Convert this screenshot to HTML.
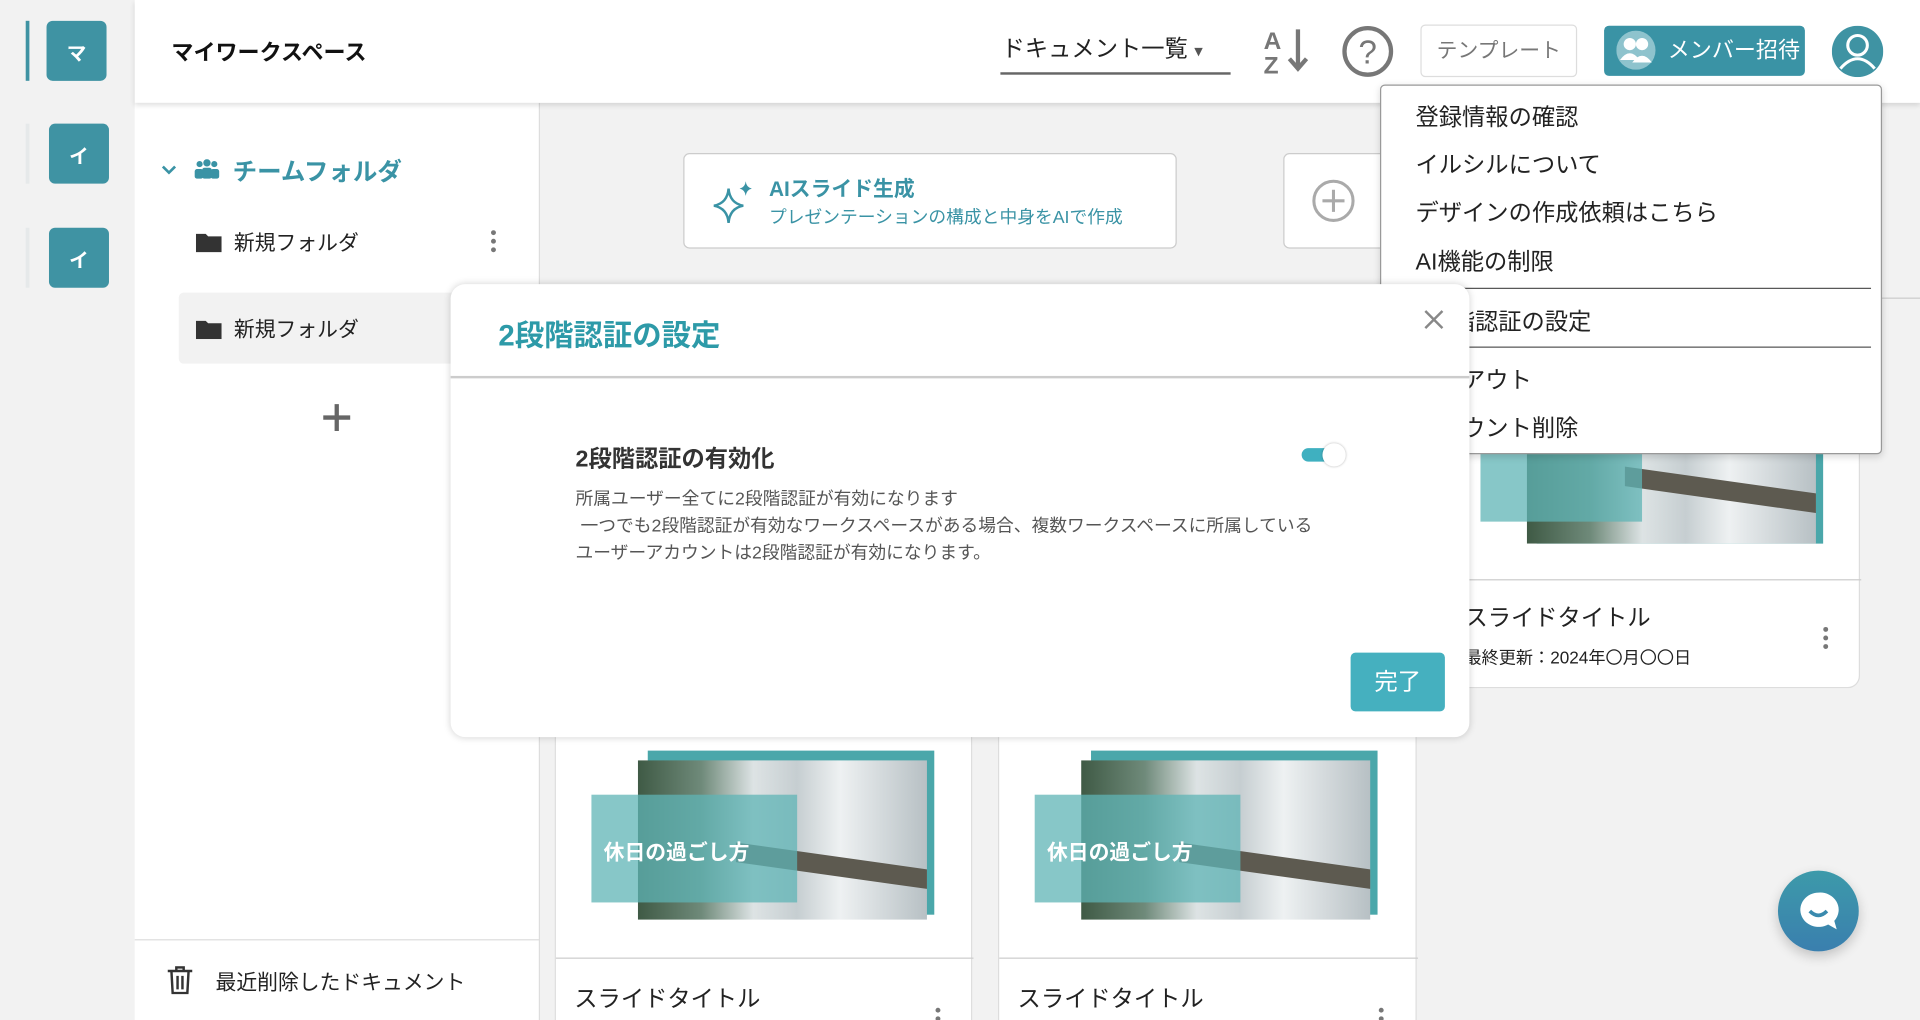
<!DOCTYPE html>
<html><head><meta charset="utf-8"><style>
*{box-sizing:border-box;margin:0;padding:0}
html,body{width:1920px;height:1020px;overflow:hidden;background:#f2f2f2}
body{font-family:"Liberation Sans","Noto Sans CJK JP",sans-serif;color:#222}
#w{position:absolute;left:0;top:0;width:1568px;height:833px;transform:scale(1.22449);transform-origin:0 0;background:#f2f2f2;overflow:hidden}
.a{position:absolute}
.sq{position:absolute;width:49px;height:49px;background:#3f93a3;border-radius:5px;color:#fff;font-weight:bold;font-size:16px;display:flex;align-items:center;justify-content:center}
.thumb{position:absolute;width:280px;height:140px}
.thumb .fr{position:absolute;left:46px;top:0;width:234px;height:134px;background:#4aa7aa}
.thumb .ph{position:absolute;left:38px;top:8px;width:236px;height:130px;background:linear-gradient(90deg,#3f5a45 0%,#6f8a7a 22%,#dde3e4 40%,#c6ced1 55%,#eef1f2 70%,#b7c0c4 100%)}
.thumb .ph:after{content:"";position:absolute;left:80px;top:78px;width:156px;height:16px;background:#5d5a50;transform:skewY(8deg)}
.thumb .bx{position:absolute;left:0;top:36px;width:168px;height:88px;background:rgba(95,180,182,.75);color:#fff;font-weight:bold;font-size:17px;padding:33px 0 0 10px}
.card{position:absolute;background:#fff;border:1px solid #ddd}
.kb{position:absolute;width:4px}
.kb i{display:block;width:4px;height:4px;border-radius:2px;background:#777;margin-bottom:3px}
.mi{position:absolute;left:28px;font-size:19px;color:#222}
</style></head><body><div id="w">
<div class="a" style="left:21px;top:17px;width:3px;height:49px;background:#3f93a3"></div>
<div class="sq" style="left:38px;top:17px">マ</div>
<div class="a" style="left:21px;top:101px;width:3px;height:49px;background:#e6e9ea"></div>
<div class="sq" style="left:40px;top:101px">イ</div>
<div class="a" style="left:21px;top:186px;width:3px;height:49px;background:#e6e9ea"></div>
<div class="sq" style="left:40px;top:186px">イ</div>

<div class="card" style="left:558px;top:125px;width:403px;height:78px;border-color:#ccc;border-radius:5px">
<svg class="a" style="left:22px;top:20px" width="36" height="38" viewBox="0 0 36 38"><path d="M14 8 Q15 20 26 22 Q15 24 14 36 Q13 24 2 22 Q13 20 14 8Z" fill="none" stroke="#3a93a5" stroke-width="2"/><path d="M28 2 Q28.5 7 33 8 Q28.5 9 28 14 Q27.5 9 23 8 Q27.5 7 28 2Z" fill="#3a93a5"/></svg>
<div class="a" style="left:69px;top:14px;font-size:17px;font-weight:bold;color:#3a93a5">AIスライド生成</div>
<div class="a" style="left:69px;top:40px;font-size:14.5px;color:#3a93a5">プレゼンテーションの構成と中身をAIで作成</div>
</div>
<div class="card" style="left:1048px;top:125px;width:200px;height:78px;border-color:#ccc;border-radius:5px">
<svg class="a" style="left:22px;top:20px" width="36" height="36"><circle cx="18" cy="18" r="16" fill="none" stroke="#aaa" stroke-width="2.5"/><path d="M18 9v18M9 18h18" stroke="#aaa" stroke-width="2.5"/></svg>
</div>
<div class="a" style="left:1200px;top:243px;width:368px;height:1px;background:#ccc"></div>
<div class="card" style="left:1170px;top:243px;width:349px;height:319px;border-radius:0 0 10px 10px">
<div class="thumb" style="left:38px;top:100px;height:100px;overflow:hidden"><div class="fr"></div><div class="ph" style="top:-30px"></div><div class="bx" style="top:0;height:82px;width:132px;padding-top:0">休日の過ごし方</div></div>
<div class="a" style="left:0;top:229px;width:349px;height:1px;background:#ccc"></div>
<div class="a" style="left:25px;top:246px;font-size:19px">スライドタイトル</div>
<div class="a" style="left:25px;top:283px;font-size:14px">最終更新：2024年〇月〇〇日</div>
<div class="kb" style="left:318px;top:268px"><i></i><i></i><i></i></div>
</div>
<div class="card" style="left:453px;top:590px;width:341px;height:260px">
<div class="thumb" style="left:29px;top:22px"><div class="fr"></div><div class="ph"></div><div class="bx">休日の過ごし方</div></div>
<div class="a" style="left:0;top:191px;width:341px;height:1px;background:#ccc"></div>
<div class="a" style="left:15px;top:210px;font-size:19px">スライドタイトル</div>
<div class="kb" style="left:310px;top:232px"><i></i><i></i><i></i></div>
</div>
<div class="card" style="left:815px;top:590px;width:342px;height:260px">
<div class="thumb" style="left:29px;top:22px"><div class="fr"></div><div class="ph"></div><div class="bx">休日の過ごし方</div></div>
<div class="a" style="left:0;top:191px;width:342px;height:1px;background:#ccc"></div>
<div class="a" style="left:15px;top:210px;font-size:19px">スライドタイトル</div>
<div class="kb" style="left:310px;top:232px"><i></i><i></i><i></i></div>
</div>

<div class="a" style="left:110px;top:84px;width:331px;height:749px;background:#fff;border-right:1px solid #ddd">
<svg class="a" style="left:22px;top:50px" width="12" height="10"><path d="M1 2l5 5 5-5" fill="none" stroke="#3a93a5" stroke-width="2.2"/></svg>
<svg class="a" style="left:48px;top:46px" width="22" height="16" fill="#3a93a5"><circle cx="5" cy="4" r="2.5"/><circle cx="11" cy="3" r="3"/><circle cx="17" cy="4" r="2.5"/><rect x="1" y="8" width="7" height="8" rx="2"/><rect x="7" y="7" width="8" height="9" rx="2"/><rect x="14" y="8" width="7" height="8" rx="2"/></svg>
<div class="a" style="left:80px;top:40px;font-size:20px;font-weight:bold;color:#3a93a5">チームフォルダ</div>
<svg class="a" style="left:50px;top:106px" width="21" height="16"><path d="M0 1h8l2 2h11v13H0z" fill="#333"/></svg>
<div class="a" style="left:81px;top:100px;font-size:17px">新規フォルダ</div>
<div class="kb" style="left:291px;top:104px"><i></i><i></i><i></i></div>
<div class="a" style="left:36px;top:155px;width:260px;height:58px;background:#f2f2f2;border-radius:4px"></div>
<svg class="a" style="left:50px;top:177px" width="21" height="16"><path d="M0 1h8l2 2h11v13H0z" fill="#333"/></svg>
<div class="a" style="left:81px;top:171px;font-size:17px">新規フォルダ</div>
<svg class="a" style="left:153px;top:245px" width="24" height="24"><path d="M12 1v22M1 12h22" stroke="#666" stroke-width="3.5"/></svg>
<div class="a" style="left:0;top:683px;width:331px;height:1px;background:#ddd"></div>
<svg class="a" style="left:26px;top:705px" width="22" height="23"><path d="M1 4h20M8 4V1h6v3M4 4l1 18h12l1-18M9 8v11M13 8v11" fill="none" stroke="#333" stroke-width="2"/></svg>
<div class="a" style="left:66px;top:704px;font-size:17px">最近削除したドキュメント</div>
</div>

<div class="a" style="left:110px;top:0;width:1458px;height:84px;background:#fff;box-shadow:0 2px 4px rgba(0,0,0,.12)">
<div class="a" style="left:30px;top:29px;font-size:18px;font-weight:bold;color:#111">マイワークスペース</div>
<div class="a" style="left:708px;top:25px;font-size:19px;color:#222">ドキュメント一覧 <span style="font-size:14px;color:#555">▾</span></div>
<div class="a" style="left:707px;top:59px;width:188px;height:2px;background:#666"></div>
<svg class="a" style="left:920px;top:21px" width="42" height="40"><text x="2" y="19" font-family="Liberation Sans" font-weight="bold" font-size="20" fill="#777">A</text><text x="2" y="39" font-family="Liberation Sans" font-weight="bold" font-size="20" fill="#777">Z</text><path d="M30 3v32M23 27l7 8 7-8" fill="none" stroke="#777" stroke-width="3.5"/></svg>
<svg class="a" style="left:985px;top:20px" width="44" height="44"><circle cx="22" cy="22" r="19" fill="none" stroke="#777" stroke-width="3.5"/><text x="22" y="32" text-anchor="middle" font-family="Liberation Sans" font-size="27" fill="#777">?</text></svg>
<div class="a" style="left:1050px;top:20px;width:128px;height:43px;border:1px solid #ddd;border-radius:4px;font-size:17px;color:#777;text-align:center;line-height:41px">テンプレート</div>
<div class="a" style="left:1200px;top:21px;width:164px;height:41px;background:#3a93a5;border-radius:4px;color:#fff;font-size:18px;line-height:41px;padding-left:52px">メンバー招待</div>
<svg class="a" style="left:1210px;top:25px" width="32" height="32"><circle cx="16" cy="16" r="16" fill="#8ec3cd"/><circle cx="11" cy="11" r="5" fill="#fff"/><circle cx="21" cy="11" r="5" fill="#fff"/><path d="M3 24q8-11 16 0zM13 26q8-11 16 0z" fill="#fff"/></svg>
<svg class="a" style="left:1386px;top:21px" width="42" height="42"><circle cx="21" cy="21" r="21" fill="#3f93a3"/><circle cx="21" cy="16" r="8" fill="none" stroke="#fff" stroke-width="2.5"/><path d="M7 35q14-16 28 0" fill="none" stroke="#fff" stroke-width="2.5"/></svg>
</div>

<div class="a" style="left:1127px;top:69px;width:410px;height:302px;background:#fff;border:1px solid #999;border-radius:4px;box-shadow:0 2px 6px rgba(0,0,0,.15)">
<div class="mi" style="top:11px">登録情報の確認</div>
<div class="mi" style="top:50px">イルシルについて</div>
<div class="mi" style="top:89px">デザインの作成依頼はこちら</div>
<div class="mi" style="top:129px">AI機能の制限</div>
<div class="a" style="left:0;top:165px;width:400px;height:1px;background:#555"></div>
<div class="mi" style="top:178px">2段階認証の設定</div>
<div class="a" style="left:0;top:213px;width:400px;height:1px;background:#555"></div>
<div class="mi" style="top:226px">ログアウト</div>
<div class="mi" style="top:265px">アカウント削除</div>
</div>

<div class="a" style="left:368px;top:232px;width:832px;height:370px;background:#fff;border-radius:12px;box-shadow:0 0 6px rgba(0,0,0,.18)">
<div class="a" style="left:39px;top:22px;font-size:24px;font-weight:bold;color:#2d9aa8">2段階認証の設定</div>
<svg class="a" style="left:795px;top:21px" width="16" height="16"><path d="M1 1l14 14M15 1L1 15" stroke="#888" stroke-width="2"/></svg>
<div class="a" style="left:0;top:75px;width:832px;height:2px;background:#ccc"></div>
<div class="a" style="left:102px;top:128px;font-size:19px;font-weight:bold;color:#333">2段階認証の有効化</div>
<div class="a" style="left:695px;top:134px;width:24px;height:11px;background:#3fb0c0;border-radius:6px"></div>
<div class="a" style="left:712px;top:130px;width:19px;height:19px;background:#fff;border-radius:50%;box-shadow:0 0 2px rgba(0,0,0,.3)"></div>
<div class="a" style="left:102px;top:165px;font-size:14.5px;color:#555;line-height:22px">所属ユーザー全てに2段階認証が有効になります<br>&nbsp;一つでも2段階認証が有効なワークスペースがある場合、複数ワークスペースに所属している<br>ユーザーアカウントは2段階認証が有効になります。</div>
<div class="a" style="left:735px;top:301px;width:77px;height:48px;background:#45b0bf;border-radius:4px;color:#fff;font-size:19px;text-align:center;line-height:50px">完了</div>
</div>

<div class="a" style="left:1452px;top:711px;width:66px;height:66px;border-radius:50%;background:linear-gradient(180deg,#3d9aaa,#3a7fae);box-shadow:0 4px 10px rgba(0,0,0,.2)">
<svg class="a" style="left:14px;top:14px" width="38" height="38"><path d="M19 4a15 14 0 1 0 8 26l7 4-2-7a15 14 0 0 0-13-23z" fill="#fff"/><path d="M12 19q7 7 14 0" fill="none" stroke="#3a8aae" stroke-width="3"/></svg>
</div>
</div></body></html>
